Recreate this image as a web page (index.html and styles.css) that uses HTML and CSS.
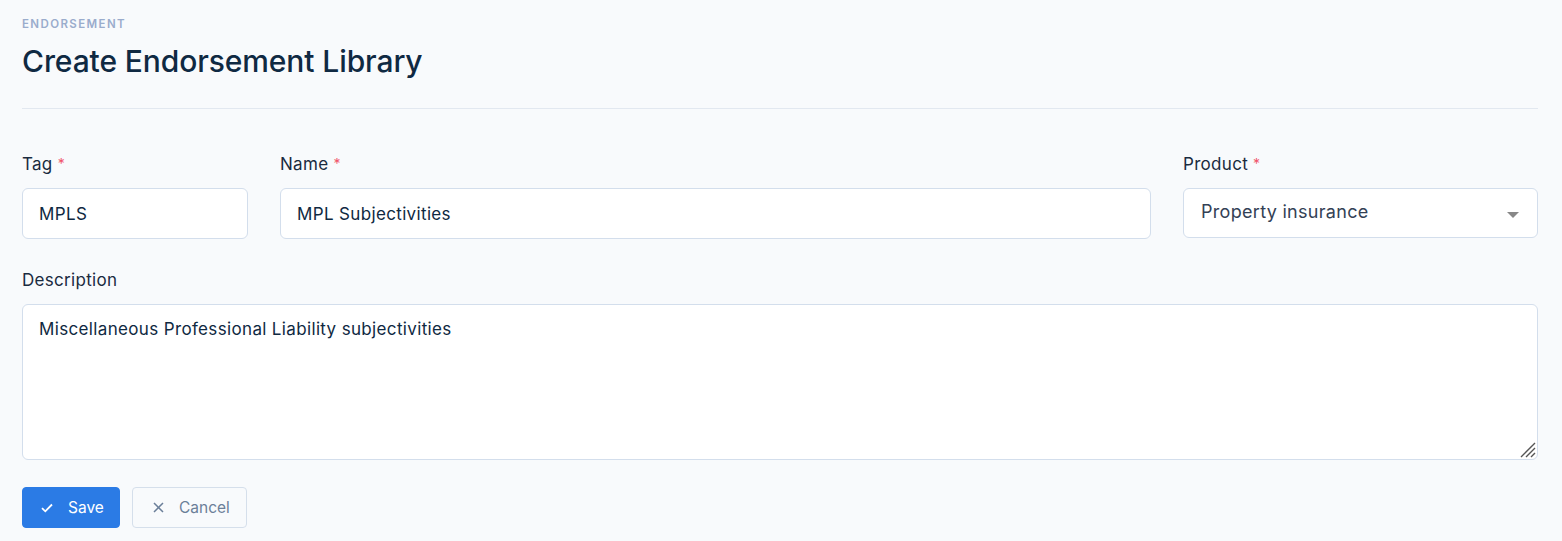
FILE: index.html
```html
<!DOCTYPE html>
<html>
<head>
<meta charset="utf-8">
<link rel="stylesheet" href="styles.css">
</head>
<body>
<div class="page">
  <header class="head">
    <div class="eyebrow">ENDORSEMENT</div>
    <h1 class="title">Create Endorsement Library</h1>
  </header>
  <form class="form">
    <div class="grid">
      <div class="field col-2">
        <label class="label">Tag <span class="req">*</span></label>
        <div class="input">MPLS</div>
      </div>
      <div class="field col-7">
        <label class="label">Name <span class="req">*</span></label>
        <div class="input">MPL Subjectivities</div>
      </div>
      <div class="field col-3">
        <label class="label">Product <span class="req">*</span></label>
        <div class="select">
          <span class="select-value">Property insurance</span>
          <svg class="caret" width="12" height="6" viewBox="0 0 12 6"><path d="M0 0h12L6 6z" fill="#888"/></svg>
        </div>
      </div>
      <div class="field col-12">
        <label class="label">Description</label>
        <div class="textarea">Miscellaneous Professional Liability subjectivities
          <svg class="grip" width="18" height="18" viewBox="0 0 18 18"><path d="M17 3L3 17M17 8L8 17M17 13L13 17" stroke="#555" stroke-width="1.4" fill="none"/></svg>
        </div>
      </div>
    </div>
    <div class="actions">
      <button type="button" class="btn btn-primary">
        <svg class="ico" width="12" height="10" viewBox="0 0 12 10"><path d="M1 5.2l3.3 3.1L11 1.5" stroke="#fff" stroke-width="1.8" fill="none"/></svg>
        <span>Save</span>
      </button>
      <button type="button" class="btn btn-outline">
        <svg class="ico" width="11" height="11" viewBox="0 0 11 11"><path d="M1 1l9 9M10 1L1 10" stroke="#6b7f99" stroke-width="1.5" fill="none"/></svg>
        <span>Cancel</span>
      </button>
    </div>
  </form>
</div>
</body>
</html>
```
FILE: styles.css
```css
* { box-sizing: border-box; }
html, body { margin: 0; padding: 0; }
body {
  background: #f8fafc;
  font-family: "Inter", "Noto Sans", sans-serif;
  color: #0f2942;
}
.page { padding: 16px 24px 0 22px; }
.head { padding-bottom: 27px; border-bottom: 1px solid #e2e8f0; }
.eyebrow {
  font-size: 11.5px;
  font-weight: 600;
  letter-spacing: 1.4px;
  color: #9aaccc;
  line-height: 16px;
}
.title {
  margin: 9px 0 0;
  font-size: 30px;
  font-weight: 500;
  line-height: 40px;
  color: #0f2942;
  letter-spacing: -0.1px;
}
.form { padding-top: 44px; }
.grid {
  display: grid;
  grid-template-columns: repeat(12, 1fr);
  column-gap: 32px;
  row-gap: 30px;
}
.col-2 { grid-column: span 2; }
.col-3 { grid-column: span 3; }
.col-7 { grid-column: span 7; }
.col-12 { grid-column: span 12; }
.label {
  display: block;
  font-size: 17px;
  letter-spacing: 0.3px;
  line-height: 22px;
  color: #1a2b3f;
  margin-bottom: 13px;
}
.req { color: #f0546a; font-size: 14px; vertical-align: top; }
.input, .select, .textarea {
  background: #fff;
  border: 1px solid #d3deec;
  border-radius: 6px;
  font-size: 17px;
  letter-spacing: 0.35px;
  color: #0f2942;
}
.input { height: 51px; padding: 0 16px; display: flex; align-items: center; }
.select {
  height: 50px;
  padding: 0 18px 4px 17px;
  display: flex;
  align-items: center;
  justify-content: space-between;
}
.select-value { font-size: 18px; letter-spacing: 0.3px; color: #334155; }
.caret { margin-top: 8px; flex: none; }
.textarea {
  position: relative;
  height: 156px;
  padding: 13px 16px;
  line-height: 22px;
}
.grip { position: absolute; right: 1px; bottom: 1px; }
.actions { display: flex; gap: 12px; margin-top: 27px; }
.btn {
  height: 41px;
  border-radius: 4px;
  font-family: inherit;
  font-size: 15.5px;
  display: flex;
  align-items: center;
  gap: 15px;
  padding: 0 17px 0 18px;
  cursor: pointer;
  white-space: nowrap;
}
.ico { flex: none; }
.btn-primary { background: #2b7be5; border: 1px solid #2b7be5; color: #fff; width: 98px; }
.btn-outline { background: transparent; border: 1px solid #d5dfeb; color: #6b7f99; width: 115px; padding-left: 20px; gap: 15px; }
```
